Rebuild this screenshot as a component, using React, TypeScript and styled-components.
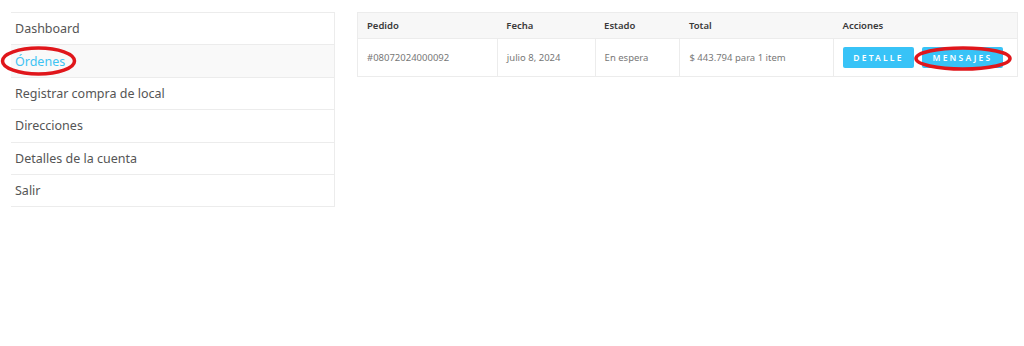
import React from "react";
import styled, { createGlobalStyle } from "styled-components";

const Global = createGlobalStyle`
  html, body { margin: 0; padding: 0; background: #fff; }
  body { font-family: "Noto Sans", "DejaVu Sans", sans-serif; }
  * { box-sizing: border-box; }
`;

const Page = styled.div`
  position: relative;
  width: 1024px;
  height: 346px;
  display: flex;
  align-items: flex-start;
  gap: 22px;
  padding: 12px 0 0 11px;
`;

const Sidebar = styled.nav`
  width: 324px;
  display: flex;
  flex-direction: column;
  border-top: 1px solid #ececec;
  border-right: 1px solid #ececec;
`;

const NavItem = styled.div<{ $active?: boolean }>`
  height: 32.4px;
  display: flex;
  align-items: center;
  padding-left: 4px;
  font-size: 12.5px;
  color: ${(p) => (p.$active ? "#3fc3f3" : "#555")};
  background: ${(p) => (p.$active ? "#f9f9f9" : "#fff")};
  border-bottom: 1px solid #ececec;
`;

const Table = styled.table`
  width: 661px;
  border-collapse: collapse;
  border: 1px solid #ececec;
  font-size: 9.5px;
`;

const Th = styled.th<{ $w: number }>`
  width: ${(p) => p.$w}px;
  height: 26px;
  text-align: left;
  padding: 0 9px;
  background: #f7f7f7;
  color: #3a3a3a;
  font-weight: 600;
  font-size: 9.5px;
`;

const Td = styled.td`
  height: 38px;
  padding: 0 9px;
  color: #777;
  border-left: 1px solid #ececec;
  border-top: 1px solid #ececec;
  &:first-child { border-left: none; }
`;

const Actions = styled.div`
  display: flex;
  gap: 8px;
`;

const Btn = styled.button<{ $w: number }>`
  width: ${(p) => p.$w}px;
  height: 21px;
  border: none;
  border-radius: 2px;
  background: #38c3f7;
  color: #fff;
  font-family: inherit;
  font-size: 8.5px;
  font-weight: 600;
  letter-spacing: 2.2px;
  padding: 0;
`;

const Mark = styled.svg`
  position: absolute;
  left: 0;
  top: 0;
  pointer-events: none;
`;

export default function App() {
  const items = [
    "Dashboard",
    "Órdenes",
    "Registrar compra de local",
    "Direcciones",
    "Detalles de la cuenta",
    "Salir",
  ];
  return (
    <>
      <Global />
      <Page>
        <Sidebar>
          {items.map((t) => (
            <NavItem key={t} $active={t === "Órdenes"}>
              {t}
            </NavItem>
          ))}
        </Sidebar>
        <Table>
          <thead>
            <tr>
              <Th $w={140}>Pedido</Th>
              <Th $w={98}>Fecha</Th>
              <Th $w={85}>Estado</Th>
              <Th $w={154}>Total</Th>
              <Th $w={184}>Acciones</Th>
            </tr>
          </thead>
          <tbody>
            <tr>
              <Td>#08072024000092</Td>
              <Td>julio 8, 2024</Td>
              <Td>En espera</Td>
              <Td>$ 443.794 para 1 item</Td>
              <Td>
                <Actions>
                  <Btn $w={71}>DETALLE</Btn>
                  <Btn $w={81}>MENSAJES</Btn>
                </Actions>
              </Td>
            </tr>
          </tbody>
        </Table>
        <Mark width="1024" height="346" viewBox="0 0 1024 346">
          <ellipse cx="38.5" cy="61" rx="36" ry="13" fill="none" stroke="#e0161b" strokeWidth="3.5" />
          <ellipse cx="963" cy="58.5" rx="47" ry="10.5" fill="none" stroke="#e0161b" strokeWidth="3.5" />
        </Mark>
      </Page>
    </>
  );
}
